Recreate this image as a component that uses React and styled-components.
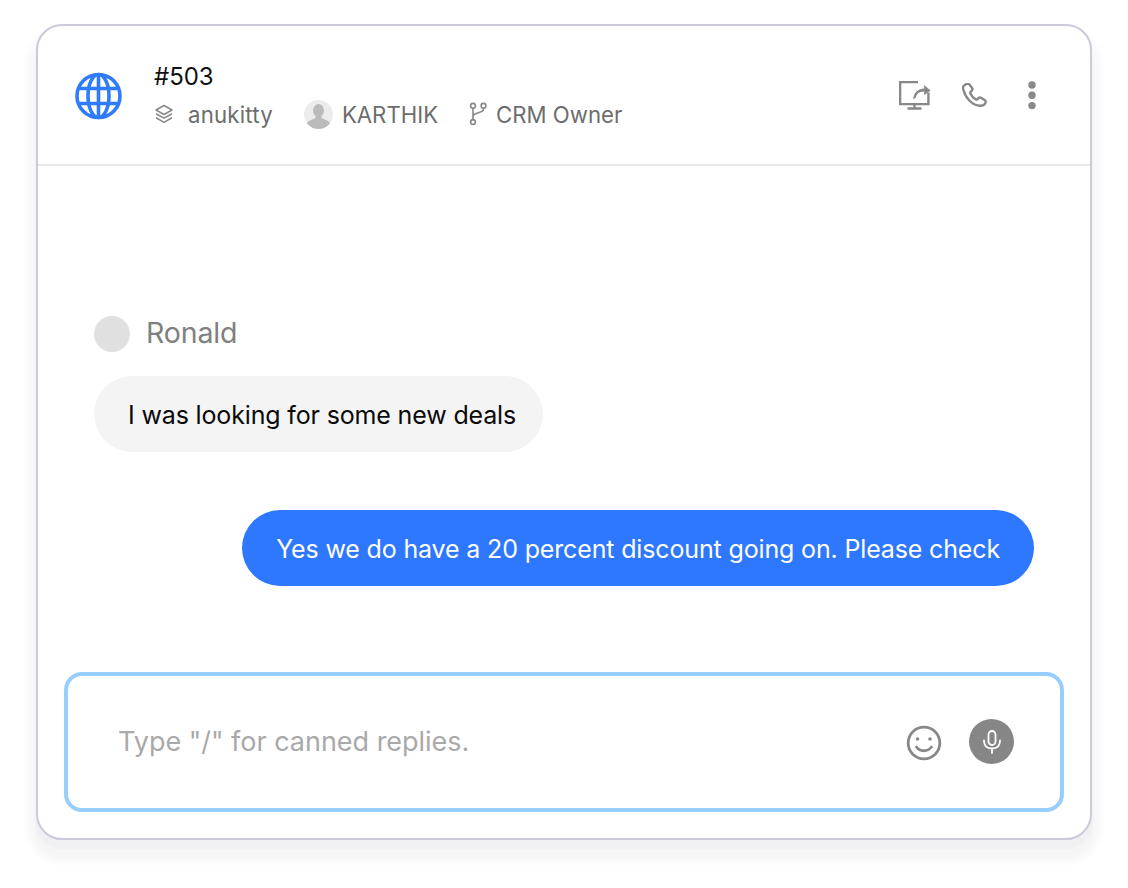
import React from "react";
import styled, { createGlobalStyle } from "styled-components";

const Global = createGlobalStyle`
  html, body { margin: 0; padding: 0; background: #fff; }
  body { font-family: Inter, "Liberation Sans", sans-serif; }
`;
const Page = styled.div`
  width: 1128px; height: 888px; box-sizing: border-box; padding: 24px 36px 48px 36px;
`;
const Card = styled.div`
  width: 1056px; height: 816px; box-sizing: border-box;
  display: flex; flex-direction: column;
  background: #fff; border: 2px solid #cacadb; border-radius: 26px;
  box-shadow: 0 9px 1px 0 #f0f0f2, 0 15px 4px 3px #f5f5f6, 0 14px 6px 10px #fafafa;
`;
const Header = styled.header`
  height: 140px; flex: none; box-sizing: border-box; display: flex; align-items: center;
  padding: 0 54px 0 37px; border-bottom: 2px solid #e7e7ea;
`;
const Globe = styled.svg`width: 48px; height: 48px; flex: none; margin-top: 1px;`;
const HeadInfo = styled.div`
  margin-left: 31px; display: flex; flex-direction: column; gap: 8px; flex: 1; margin-top: 3px;
`;
const Ticket = styled.div`font-size: 24px; line-height: 28px; color: #111; letter-spacing: -0.05px; margin-top: -1px;`;
const Meta = styled.div`display: flex; align-items: center; height: 30px; color: #6d6d6d; font-size: 22.2px;`;
const MetaItem = styled.span`display: flex; align-items: center; gap: ${p => p.$gap}px; margin-right: ${p => p.$mr}px; letter-spacing: ${p => p.$ls}px;`;
const Avatar = styled.span`
  width: 29px; height: 29px; border-radius: 50%; background: #ececec; overflow: hidden; display: block;
`;
const Actions = styled.div`display: flex; align-items: center; gap: 31px;`;
const Messages = styled.main`
  flex: 1; display: flex; flex-direction: column; padding: 149px 56px 0 56px;
`;
const Sender = styled.div`display: flex; align-items: center; gap: 16px; height: 38px;`;
const Dot = styled.span`width: 36px; height: 36px; border-radius: 50%; background: #e0e0e0;`;
const SenderName = styled.span`font-size: 28.500px; color: #808080; letter-spacing: -0.15px; margin-top: -4px;`;
const Bubble = styled.div`
  align-self: ${p => (p.$mine ? "flex-end" : "flex-start")};
  height: 76px; box-sizing: border-box; display: flex; align-items: center;
  padding: 2px 34px 0 34px; border-radius: 38px;
  padding-right: ${p => (p.$mine ? 34 : 27)}px;
  background: ${p => (p.$mine ? "#2e77ff" : "#f4f4f4")};
  color: ${p => (p.$mine ? "#fff" : "#0a0a0a")};
  font-size: 25px; letter-spacing: -0.15px; white-space: nowrap;
  margin-top: ${p => p.$mt}px;
`;
const Composer = styled.div`
  margin: 0 26px 26px 26px; height: 140px; box-sizing: border-box; flex: none;
  display: flex; align-items: center; padding: 0 46px 0 50px;
  border: 4px solid #98cefe; border-radius: 18px;
`;
const Placeholder = styled.div`flex: 1; font-size: 27px; color: #a9a9a9; letter-spacing: -0.02px; margin-top: -1px;`;
const Mic = styled.span`
  width: 45px; height: 45px; border-radius: 50%; background: #868686; margin-left: 27px;
  display: flex; align-items: center; justify-content: center; margin-top: -1px;
`;
const Smile = styled.svg`width: 36px; height: 36px; margin-top: 1px;`;

const stroke = { fill: "none", stroke: "#888", strokeWidth: 2, strokeLinecap: "round", strokeLinejoin: "round" };

export default function App() {
  return (
    <Page>
      <Global />
      <Card>
        <Header>
          <Globe viewBox="0 0 48 48" fill="none" stroke="#2f7bfb" strokeWidth="3.600">
            <circle cx="23.500" cy="24" r="21.500" />
            <ellipse cx="23.500" cy="24" rx="10.500" ry="21.500" />
            <path d="M23.500 2.500v43M5 16.500h37M5 31.500h37" />
          </Globe>
          <HeadInfo>
            <Ticket>#503</Ticket>
            <Meta>
              <MetaItem $gap={14} $mr={31} $ls={0.22}>
                <svg width="20" height="20" viewBox="0 0 20 20" {...stroke} strokeWidth="1.500">
                  <path d="M10 1.500 18 6l-8 4.500L2 6z" />
                  <path d="M2.500 10 10 14.200 17.500 10" />
                  <path d="M2.500 14 10 18.300 17.500 14" />
                </svg>
                anukitty
              </MetaItem>
              <MetaItem $gap={9} $mr={31} $ls={0}>
                <Avatar>
                  <svg width="29" height="29" viewBox="0 0 29 29">
                    <ellipse cx="14.500" cy="10.500" rx="5.500" ry="6.500" fill="#bbb" />
                    <path d="M11.500 15h6v3l6.500 3c2 1 2.500 3 2.500 8H2.500c0-5 .5-7 2.500-8l6.500-3z" fill="#bbb" />
                  </svg>
                </Avatar>
                KARTHIK
              </MetaItem>
              <MetaItem $gap={8} $mr={0} $ls={0}>
                <svg width="19" height="24" viewBox="0 0 19 24" {...stroke} strokeWidth="1.600">
                  <circle cx="4" cy="3.800" r="2.400" />
                  <circle cx="14.500" cy="3.800" r="2.400" />
                  <circle cx="4" cy="20" r="2.400" />
                  <path d="M4 6.200v11.400M14.500 6.200v1.300c0 3.500-10.500 3-10.500 7" />
                </svg>
                CRM Owner
              </MetaItem>
            </Meta>
          </HeadInfo>
          <Actions>
            <svg width="32" height="30" viewBox="0 0 32 30" {...stroke} strokeWidth="2.400" strokeLinecap="butt" strokeLinejoin="miter">
              <path d="M19 2.100H1.100v22h28.300V12.500" />
              <path d="M15.500 24v4.500M8.500 28.500h14" />
              <path d="M14.200 19c.5-6 4-10.300 11-10.600V5l6.300 5.500-6.300 4.800v-3.700c-5.500 0-7.800 2.800-8.500 6.400z" fill="#888" stroke="none" />
            </svg>
            <svg width="25" height="24" viewBox="0 0 25 24" {...stroke} strokeWidth="2.400" style={{ marginRight: 10 }}>
              <path d="M3.800 1.300 2 2.600C.8 3.500.9 5 1.300 6.500c1.200 4.500 3 8 6 11 3 2.900 7.500 5.200 11 5.300 2.800.1 4.800-1.500 5.300-3.300.3-1-.2-2-1-2.500l-3.600-2.200c-.9-.5-1.800-.4-2.500.3l-1 1c-.6.600-1.400.6-2.100.2-2.300-1.400-3.900-3.300-5-5.700-.3-.7-.2-1.400.4-1.900l1-1c.7-.7.800-1.500.4-2.400L8.100 2.400C7.200.8 5.300.3 3.800 1.300z" />
            </svg>
            <svg width="8" height="29" viewBox="0 0 8 29" fill="#888">
              <circle cx="4" cy="4" r="3.700" />
              <circle cx="4" cy="14.300" r="3.700" />
              <circle cx="4" cy="24.600" r="3.700" />
            </svg>
          </Actions>
        </Header>
        <Messages>
          <Sender>
            <Dot />
            <SenderName>Ronald</SenderName>
          </Sender>
          <Bubble $mt={23}>I was looking for some new deals</Bubble>
          <Bubble $mine $mt={58}>Yes we do have a 20 percent discount going on. Please check</Bubble>
        </Messages>
        <Composer>
          <Placeholder>Type "/" for canned replies.</Placeholder>
          <Smile viewBox="0 0 36 36" fill="none" stroke="#888" strokeWidth="2.800" strokeLinecap="round">
            <circle cx="18" cy="18" r="15.800" />
            <circle cx="11.500" cy="14" r="1.800" fill="#888" stroke="none" />
            <circle cx="24" cy="14" r="1.800" fill="#888" stroke="none" />
            <path d="M10.500 22c3.500 5 11 5 15 0" />
          </Smile>
          <Mic>
            <svg width="20" height="24" viewBox="0 0 20 24" fill="none" stroke="#fff" strokeWidth="1.800" strokeLinecap="round">
              <rect x="6.500" y="1" width="7" height="14" rx="3.500" />
              <path d="M2 10.500c0 5 3 8 8 8s8-3 8-8M10 18.500V23" />
            </svg>
          </Mic>
        </Composer>
      </Card>
    </Page>
  );
}
